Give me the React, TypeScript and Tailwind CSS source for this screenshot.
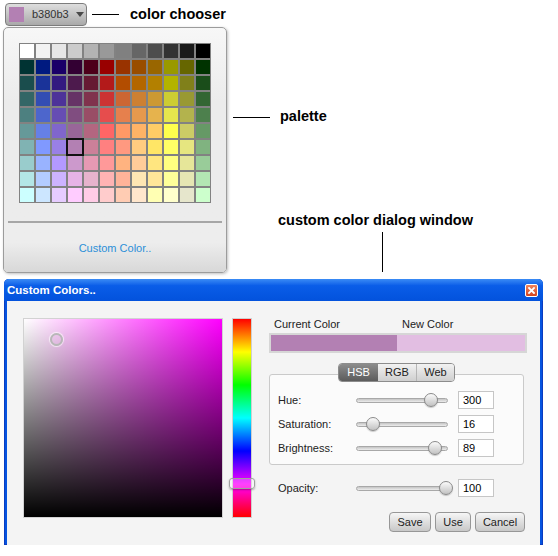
import React from "react";

const PALETTE: string[][] = [
  ["ffffff", "f2f2f2", "e6e6e6", "cccccc", "b3b3b3", "999999", "808080", "666666", "4d4d4d", "333333", "1a1a1a", "000000"],
  ["003333", "001a80", "1a0068", "330033", "4d001a", "990000", "993300", "994d00", "996600", "999900", "666600", "003300"],
  ["1a4d4d", "1a3399", "331a80", "4d1a4d", "661a33", "b31a1a", "b34d00", "b36600", "b38000", "b3b300", "80801a", "1a4d1a"],
  ["336666", "334db3", "4d3399", "663366", "80334d", "cc3333", "cc6633", "cc8033", "cc9933", "cccc33", "999933", "336633"],
  ["4d8080", "4d66cc", "664db3", "804d80", "994d66", "e64d4d", "e6804d", "e6994d", "e6b34d", "e6e64d", "b3b34d", "4d804d"],
  ["669999", "6680e6", "8066cc", "996699", "b36680", "ff6666", "ff9966", "ffb366", "ffcc66", "ffff4d", "cccc66", "669966"],
  ["80b3b3", "8099ff", "9980e6", "b380b3", "cc8099", "ff8080", "ff9980", "ffcc80", "ffe666", "ffff66", "e6e680", "80b380"],
  ["99cccc", "99b3ff", "b399ff", "cc99cc", "e699b3", "ff9999", "ffb380", "ffcc99", "ffe680", "ffff80", "e6e699", "99cc99"],
  ["b3e6e6", "b3ccff", "ccb3ff", "e6b3e6", "e6b3cc", "ffb3b3", "ffb399", "ffe6b3", "ffe699", "ffff99", "e6e6b3", "b3e6b3"],
  ["ccffff", "cce6ff", "e6ccff", "ffccff", "ffcce6", "ffcccc", "ffccb3", "ffe6cc", "ffffb3", "ffffcc", "e6e6cc", "ccffcc"],
];

const SELECTED = "b380b3";

function Slider({ pos }: { pos: number }) {
  return (
    <div className="relative flex h-[14px] w-[92px] items-center">
      <div className="h-[5px] w-full rounded-full border border-[#a8a8a8] bg-gradient-to-b from-[#c4c4c4] to-[#ededed]" />
      <div
        className="absolute top-0 h-[14px] w-[14px] rounded-full border border-[#8a8a8a] bg-gradient-to-b from-[#fbfbfb] to-[#c2c2c2] shadow-[0_1px_1px_rgba(0,0,0,0.2)]"
        style={{ left: pos - 7 }}
      />
    </div>
  );
}

function SliderRow({ label, value, pos }: { label: string; value: string; pos: number }) {
  return (
    <div className="flex h-[24px] items-center">
      <span className="w-[78px] text-[11px] text-[#222]">{label}</span>
      <Slider pos={pos} />
      <div className="ml-[10px] flex h-[18px] w-[36px] items-center border border-[#c6c6c6] bg-white pl-[4px] text-[11px] text-black">
        {value}
      </div>
    </div>
  );
}

function DialogButton({ label, width }: { label: string; width: string }) {
  return (
    <button
      className={`flex h-[20px] items-center justify-center rounded-[4px] border border-[#979797] bg-gradient-to-b from-[#f6f6f6] to-[#c8c8c8] text-[11px] text-[#222] ${width}`}
    >
      {label}
    </button>
  );
}

export default function App() {
  return (
    <div className="h-[556px] w-[558px] overflow-hidden bg-white font-['Liberation_Sans',Arial,sans-serif]">
      {/* Color chooser button */}
      <div className="flex h-[26px] items-center pl-[5px] pt-[3px]">
        <div className="flex h-[23px] w-[82px] items-center rounded-[4px] border border-[#7d7d7d] bg-gradient-to-b from-[#dedede] to-[#a9a9a9] pl-[3px]">
          <div className="h-[15px] w-[15px] bg-[#b380b3]" />
          <span className="ml-[8px] text-[11px] text-[#333]">b380b3</span>
          <svg className="ml-[7px]" width="8" height="5" viewBox="0 0 8 5">
            <path d="M0 0 L8 0 L4 5 Z" fill="#4a4a4a" />
          </svg>
        </div>
        <div className="ml-[5px] h-px w-[27px] bg-black" />
        <span className="ml-[11px] text-[14.5px] font-bold text-black">color chooser</span>
      </div>

      <div className="flex">
        {/* Palette popup */}
        <div className="ml-[3px] mt-px flex h-[246px] w-[224px] flex-col overflow-hidden rounded-[5px] border border-[#9c9c9c] bg-gradient-to-b from-[#f7f7f7] to-[#ececec] to-30% shadow-[1px_1px_3px_rgba(0,0,0,0.25)]">
          <div className="pl-[15px] pt-[15px]">
            <div className="grid w-[192px] grid-cols-12 gap-[2px] bg-[#828282] p-px">
              {PALETTE.flat().map((c, i) => (
                <div
                  key={i}
                  className={`h-[14px] w-[14px] ${c === SELECTED ? "relative z-10 outline-2 outline-[#111]" : ""}`}
                  style={{ backgroundColor: `#${c}` }}
                />
              ))}
            </div>
          </div>
          <div className="mx-[4px] mt-[18px] h-[2px] bg-[#a6a6a6]" />
          <div className="flex flex-1 items-center justify-center bg-gradient-to-b from-[#ededed] from-40% to-[#d8d8d8] pt-[2px]">
            <span className="text-[11px] text-[#2b8fd8]">Custom Color..</span>
          </div>
        </div>

        {/* Annotations */}
        <div className="ml-[6px] flex flex-col">
          <div className="mt-[82px] flex h-[18px] items-center">
            <div className="h-px w-[37px] bg-black" />
            <span className="ml-[10px] text-[14.5px] font-bold text-black">palette</span>
          </div>
          <div className="ml-[45px] mt-[86px] flex h-[18px] items-center">
            <span className="text-[14.5px] font-bold text-black">custom color dialog window</span>
          </div>
          <div className="ml-[149px] mt-[2px] h-[40px] w-px bg-black" />
        </div>
      </div>

      {/* Custom colors dialog */}
      <div className="ml-[4px] mt-[6px] w-[539px] rounded-t-[5px] bg-[#0554e0] shadow-[inset_0_0_0_1px_#0a3cc0]">
        <div className="flex h-[22px] items-center justify-between rounded-t-[5px] bg-gradient-to-b from-[#3a8bf5] from-0% via-[#0a5de8] via-30% to-[#0352dc] pl-[3px] pr-[5px]">
          <span className="pt-[2px] text-[11.5px] font-bold text-white">Custom Colors..</span>
          <div className="flex h-[13px] w-[13px] items-center justify-center rounded-[2px] border border-white bg-gradient-to-b from-[#f0835c] to-[#d4431c]">
            <svg width="7" height="7" viewBox="0 0 7 7">
              <path d="M1 1 L6 6 M6 1 L1 6" stroke="white" strokeWidth="1.8" strokeLinecap="square" />
            </svg>
          </div>
        </div>

        <div className="mx-[3px] mb-[3px] flex h-[244px] bg-[#f4f4f4]">
          {/* Saturation / brightness */}
          <div className="pl-[16px] pt-[17px]">
            <div className="relative h-[200px] w-[200px] border border-[#d2d2d2] bg-[linear-gradient(to_bottom,transparent,#000),linear-gradient(to_right,#fff,#f0f)]">
              <div className="absolute left-[26px] top-[14px] h-[13px] w-[13px] rounded-full border-2 border-[#b8b8b8] shadow-[0_0_1px_1px_rgba(255,255,255,0.7)]" />
            </div>
          </div>

          {/* Hue bar */}
          <div className="ml-[9px] pt-[17px]">
            <div className="relative h-[200px] w-[20px] border border-[#cfcfcf] bg-[linear-gradient(to_bottom,#f00,#ff0,#0f0,#0ff,#00f,#f0f,#f00)]">
              <div className="absolute -left-[4px] top-[159px] h-[11px] w-[26px] rounded-[3px] border border-[#a0a0a0] bg-white/25 shadow-[0_1px_2px_rgba(0,0,0,0.3)]" />
            </div>
          </div>

          {/* Right panel */}
          <div className="ml-[17px] flex w-[258px] flex-col pt-[16px]">
            <div className="flex h-[14px] items-center text-[11px] text-[#222]">
              <span className="w-[133px] pl-[5px]">Current Color</span>
              <span>New Color</span>
            </div>
            <div className="mt-[2px] flex h-[20px] border-2 border-[#d6d6d6]">
              <div className="w-[126px] bg-[#b380b3]" />
              <div className="flex-1 bg-[#e2bee2]" />
            </div>

            <div className="mt-[10px] flex w-[255px] flex-col items-center">
              <div className="relative z-10 flex h-[19px] overflow-hidden rounded-[4px] border border-[#8c8c8c] text-[11px]">
                <div className="flex w-[39px] items-center justify-center bg-gradient-to-b from-[#8c8c8c] to-[#5c5c5c] text-white">
                  HSB
                </div>
                <div className="flex w-[39px] items-center justify-center border-r border-[#b5b5b5] bg-gradient-to-b from-[#f2f2f2] to-[#cfcfcf] text-[#222]">
                  RGB
                </div>
                <div className="flex w-[37px] items-center justify-center bg-gradient-to-b from-[#f2f2f2] to-[#cfcfcf] text-[#222]">
                  Web
                </div>
              </div>
              <div className="-mt-[8px] w-[255px] rounded-[3px] border border-[#cacaca] bg-[#fbfbfb] pb-[4px] pl-[8px] pt-[13px]">
                <SliderRow label="Hue:" value="300" pos={75} />
                <SliderRow label="Saturation:" value="16" pos={17} />
                <SliderRow label="Brightness:" value="89" pos={79} />
              </div>
            </div>

            <div className="mt-[11px] pl-[9px]">
              <SliderRow label="Opacity:" value="100" pos={90} />
            </div>

            <div className="mt-[12px] flex justify-end gap-[4px] pr-[2px]">
              <DialogButton label="Save" width="w-[42px]" />
              <DialogButton label="Use" width="w-[36px]" />
              <DialogButton label="Cancel" width="w-[50px]" />
            </div>
          </div>
        </div>
      </div>
    </div>
  );
}
